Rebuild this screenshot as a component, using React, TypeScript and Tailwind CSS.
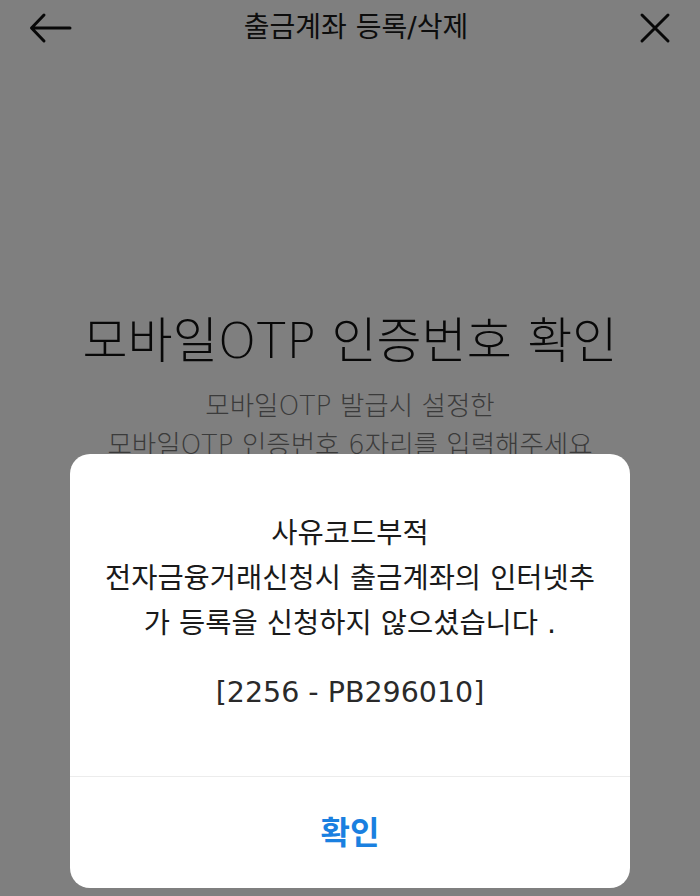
import React from "react";

const font = {
  fontFamily: '"DejaVu Sans", "Noto Sans CJK KR", sans-serif',
};

const BackIcon = () => (
  <svg viewBox="0 0 44 32" className="w-[44px] h-[32px]" fill="none">
    <path
      d="M41 16H3M15 3L2.5 16L15 29"
      stroke="#111"
      strokeWidth="3"
      strokeLinecap="round"
      strokeLinejoin="round"
    />
  </svg>
);

const CloseIcon = () => (
  <svg viewBox="0 0 32 32" className="w-[32px] h-[32px]" fill="none">
    <path
      d="M3 3L29 29M29 3L3 29"
      stroke="#111"
      strokeWidth="3"
      strokeLinecap="round"
    />
  </svg>
);

const App = () => {
  return (
    <div className="relative w-full h-[896px] overflow-hidden bg-white" style={font}>
      {/* page underneath */}
      <div className="flex flex-col items-center">
        <div className="w-full h-[56px] flex items-center justify-between px-[29px]">
          <BackIcon />
          <h1 className="text-[28px] text-[#1a1a1a]">출금계좌 등록/삭제</h1>
          <CloseIcon />
        </div>
        <h2 className="mt-[258px] text-[49px] leading-[56px] text-[#111] font-light">
          모바일OTP 인증번호 확인
        </h2>
        <p className="mt-[16px] text-[26.5px] leading-[39px] text-[#777] text-center font-light">
          모바일OTP 발급시 설정한
          <br />
          모바일OTP 인증번호 6자리를 입력해주세요
        </p>
      </div>

      {/* dim overlay */}
      <div className="absolute inset-0 bg-black/50 flex">
        <div className="mt-[454px] ml-[70px] w-[560px] h-[434px] bg-white rounded-[20px] flex flex-col overflow-hidden">
          <div className="h-[322px] flex flex-col items-center pt-[57px] text-[#1a1a1a] text-center text-[28.5px] leading-[45px]">
            <p>
              사유코드부적
              <br />
              전자금융거래신청시 출금계좌의 인터넷추
              <br />가 등록을 신청하지 않으셨습니다 .
            </p>
            <p className="mt-[24px] text-[#2a2a2a]">[2256 - PB296010]</p>
          </div>
          <div className="h-px bg-[#ececec]" />
          <button className="flex-1 flex items-center justify-center text-[32px] font-bold text-[#1a80e0]">
            확인
          </button>
        </div>
      </div>
    </div>
  );
};

export default App;
